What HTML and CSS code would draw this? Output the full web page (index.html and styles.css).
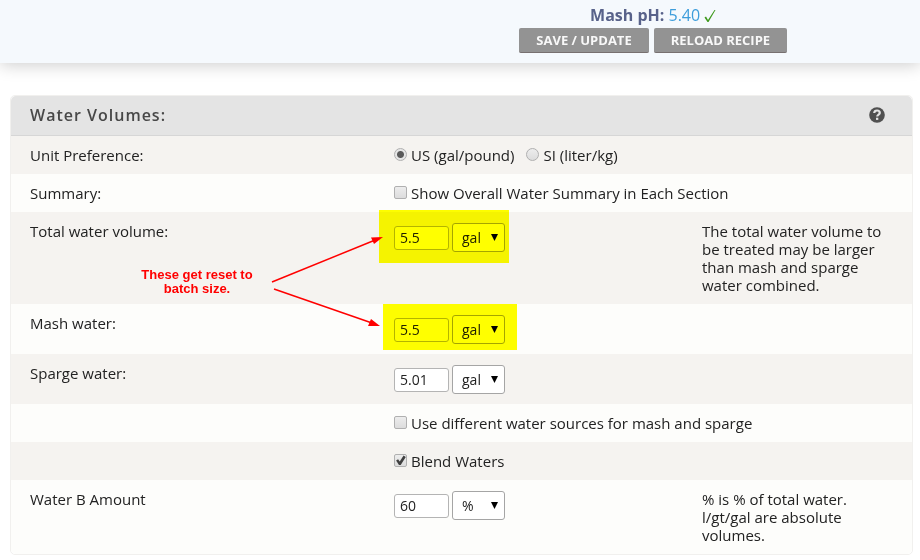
FILE: index.html
```html
<!DOCTYPE html>
<html lang="en">
<head>
    <meta charset="UTF-8">
    <meta name="viewport" content="width=device-width, initial-scale=1.0">
    <title>Water Volumes</title>
    <link rel="stylesheet" href="styles.css">
</head>
<body>
    <header class="top-bar">
        <div class="recipe-status">
            <div class="mash-ph"><strong>Mash pH:</strong> <span class="ph-value">5.40</span>
                <svg class="check" viewBox="0 0 12 14" width="12" height="14"><path d="M0.500 8.500 L2 7.500 L4 11 L10.500 1 L11.500 1 L4.500 13 L3.500 13 Z" fill="#3f9a1d"/></svg>
            </div>
            <div class="actions">
                <button type="button">SAVE / UPDATE</button>
                <button type="button">RELOAD RECIPE</button>
            </div>
        </div>
    </header>

    <form class="panel">
        <div class="panel-header">
            <h2>Water Volumes:</h2>
            <button type="button" class="help" aria-label="Help">
                <svg viewBox="0 0 16 16" width="16" height="16">
                    <circle cx="8" cy="8" r="7.800" fill="#505050"/>
                    <path d="M5.200 6 C5.400 4 6.700 3.500 8 3.500 C9.700 3.500 10.800 4.500 10.800 5.900 C10.800 7.600 8.200 7.600 8.200 9.600" fill="none" stroke="#e4e4e4" stroke-width="2.200"/>
                    <rect x="7" y="10.700" width="2.300" height="2.200" fill="#e4e4e4"/>
                </svg>
            </button>
        </div>

        <div class="row">
            <div class="label">Unit Preference:</div>
            <div class="field options">
                <label><input type="radio" name="units" checked>US (gal/pound)</label>
                <label><input type="radio" name="units">SI (liter/kg)</label>
            </div>
        </div>
        <div class="row">
            <div class="label">Summary:</div>
            <div class="field wide">
                <label><input type="checkbox" name="summary">Show Overall Water Summary in Each Section</label>
            </div>
        </div>
        <div class="row">
            <div class="label">
                <label for="total">Total water volume:</label>
                <p class="note">These get reset to batch size.</p>
                <svg class="arrows" viewBox="0 0 120 100" width="120" height="100">
                    <g stroke="#f00" stroke-width="1.500">
                        <path d="M2 50 L104 8.500"/>
                        <path d="M4 57 L102 91"/>
                    </g>
                    <g fill="#f00">
                        <path d="M113 5 L101 5.500 L104 12 Z"/>
                        <path d="M110 94 L101 87 L98 94 Z"/>
                    </g>
                </svg>
            </div>
            <div class="field">
                <div class="amount">
                    <input type="text" id="total" value="5.5">
                    <span class="unit"><select aria-label="Total water unit"><option>gal</option><option>l</option></select></span>
                </div>
                <span class="highlight highlight-total"></span>
            </div>
            <p class="hint">The total water volume to be treated may be larger than mash and sparge water combined.</p>
        </div>
        <div class="row">
            <div class="label"><label for="mash">Mash water:</label></div>
            <div class="field">
                <div class="amount">
                    <input type="text" id="mash" value="5.5">
                    <span class="unit"><select aria-label="Mash water unit"><option>gal</option><option>l</option></select></span>
                </div>
                <span class="highlight highlight-mash"></span>
            </div>
        </div>
        <div class="row">
            <div class="label"><label for="sparge">Sparge water:</label></div>
            <div class="field">
                <div class="amount">
                    <input type="text" id="sparge" value="5.01">
                    <span class="unit"><select aria-label="Sparge water unit"><option>gal</option><option>l</option></select></span>
                </div>
            </div>
        </div>
        <div class="row">
            <div class="label"></div>
            <div class="field wide">
                <label><input type="checkbox" name="sources">Use different water sources for mash and sparge</label>
            </div>
        </div>
        <div class="row">
            <div class="label"></div>
            <div class="field">
                <label><input type="checkbox" name="blend" checked>Blend Waters</label>
            </div>
        </div>
        <div class="row">
            <div class="label"><label for="waterb">Water B Amount</label></div>
            <div class="field">
                <div class="amount">
                    <input type="text" id="waterb" value="60">
                    <span class="unit"><select aria-label="Water B unit"><option>%</option><option>gal</option></select></span>
                </div>
            </div>
            <p class="hint">% is % of total water. l/gt/gal are absolute volumes.</p>
        </div>
    </form>
</body>
</html>
```
FILE: styles.css
```css
* {
    box-sizing: border-box;
}
body {
    margin: 0;
    background-color: #fff;
    color: #222;
    font-family: "Open Sans", sans-serif;
    font-size: 15px;
    line-height: 18px;
}
p, h2 {
    margin: 0;
}
.top-bar {
    padding: 3px 0 10px 42%;
    background-color: #f5f9fd;
    box-shadow: 0 2px 16px rgba(0, 0, 0, 0.2);
}
.recipe-status {
    text-align: center;
}
.mash-ph {
    padding-bottom: 1px;
    color: #58628a;
    font-size: 16px;
    line-height: 24px;
}
.ph-value {
    color: #3d9ddb;
}
.check {
    vertical-align: -2px;
}
.actions {
    display: flex;
    justify-content: center;
    gap: 5px;
}
.actions button {
    height: 25px;
    padding: 0 17px;
    border: none;
    border-bottom: 1px solid #777070;
    border-radius: 2px;
    background-color: #939393;
    color: #f8f8f8;
    font: bold 13px "Open Sans", sans-serif;
}
.panel {
    margin: 32px 7px 0 10px;
    border: 1px solid #f1f0ee;
    border-radius: 5px;
}
.panel-header {
    display: flex;
    justify-content: space-between;
    align-items: center;
    height: 40px;
    padding: 0 27px 2px 19px;
    border-bottom: 1px solid #d6d6d6;
    border-radius: 5px 5px 0 0;
    background-color: #e4e4e4;
}
.panel-header h2 {
    color: #484848;
    font-size: 16px;
    font-weight: 600;
    letter-spacing: 1px;
}
.help {
    display: flex;
    padding: 0;
    border: none;
    background: none;
}
.row {
    display: grid;
    grid-template-columns: 364fr 308fr 190fr;
    padding: 10px 20px 10px 19px;
    background-color: #fdfdfb;
}
.row:nth-child(even) {
    background-color: #f5f3f0;
}
.row:last-child {
    border-radius: 0 0 5px 5px;
}
.label, .field {
    position: relative;
}
.label {
    z-index: 1;
}
.wide {
    grid-column: span 2;
}
.field label {
    display: inline-flex;
    align-items: flex-start;
    gap: 4px;
}
.options {
    display: flex;
    gap: 12px;
}
input[type="radio"],
input[type="checkbox"] {
    appearance: none;
    flex: none;
    width: 13px;
    height: 13px;
    margin: 2px 0 0;
    border: 1px solid #b0b0b0;
    border-radius: 2px;
    background: linear-gradient(#ededed, #dcdcdc);
}
input[type="radio"] {
    border-radius: 50%;
}
input[type="radio"]:checked {
    background: radial-gradient(#5a5a5a 3px, #e6e6e6 4px);
}
input[type="checkbox"]:checked::before {
    content: "";
    display: block;
    width: 11px;
    height: 11px;
    background-color: #404040;
    clip-path: polygon(10% 50%, 28% 38%, 43% 58%, 78% 5%, 98% 18%, 52% 92%, 36% 92%);
}
.amount {
    display: flex;
    align-items: flex-end;
    gap: 3px;
    height: 30px;
}
.amount input {
    width: 55px;
    height: 24px;
    margin-bottom: 2px;
    padding: 0 5px 2px;
    border: 1px solid #b4b4b4;
    border-radius: 3px;
    background-color: #fff;
    color: #222;
    font: 14px "Open Sans", sans-serif;
}
.unit {
    position: relative;
}
.unit select {
    appearance: none;
    display: block;
    width: 53px;
    height: 29px;
    padding: 0 9px;
    border: 1px solid #a5a5a5;
    border-radius: 3px;
    background-color: #fff;
    color: #222;
    font: 14px "Open Sans", sans-serif;
}
.unit::after {
    content: "";
    position: absolute;
    top: 11px;
    right: 7px;
    width: 7px;
    height: 7px;
    background-color: #000;
    clip-path: polygon(0 0, 100% 0, 50% 100%);
    pointer-events: none;
}
/* marker strokes over the two reset fields */
.highlight {
    position: absolute;
    background-color: #ff0;
    mix-blend-mode: multiply;
    pointer-events: none;
}
.highlight-total {
    top: -12px;
    left: -15px;
    width: 130px;
    height: 53px;
}
.highlight-mash {
    top: -10px;
    left: -11px;
    width: 134px;
    height: 46px;
}
.note {
    position: absolute;
    top: 46px;
    left: 107px;
    width: 120px;
    color: #f00;
    font: bold 13px/14px "Liberation Sans", Arial, sans-serif;
    text-align: center;
}
.arrows {
    position: absolute;
    top: 10px;
    left: 240px;
    pointer-events: none;
}
```
